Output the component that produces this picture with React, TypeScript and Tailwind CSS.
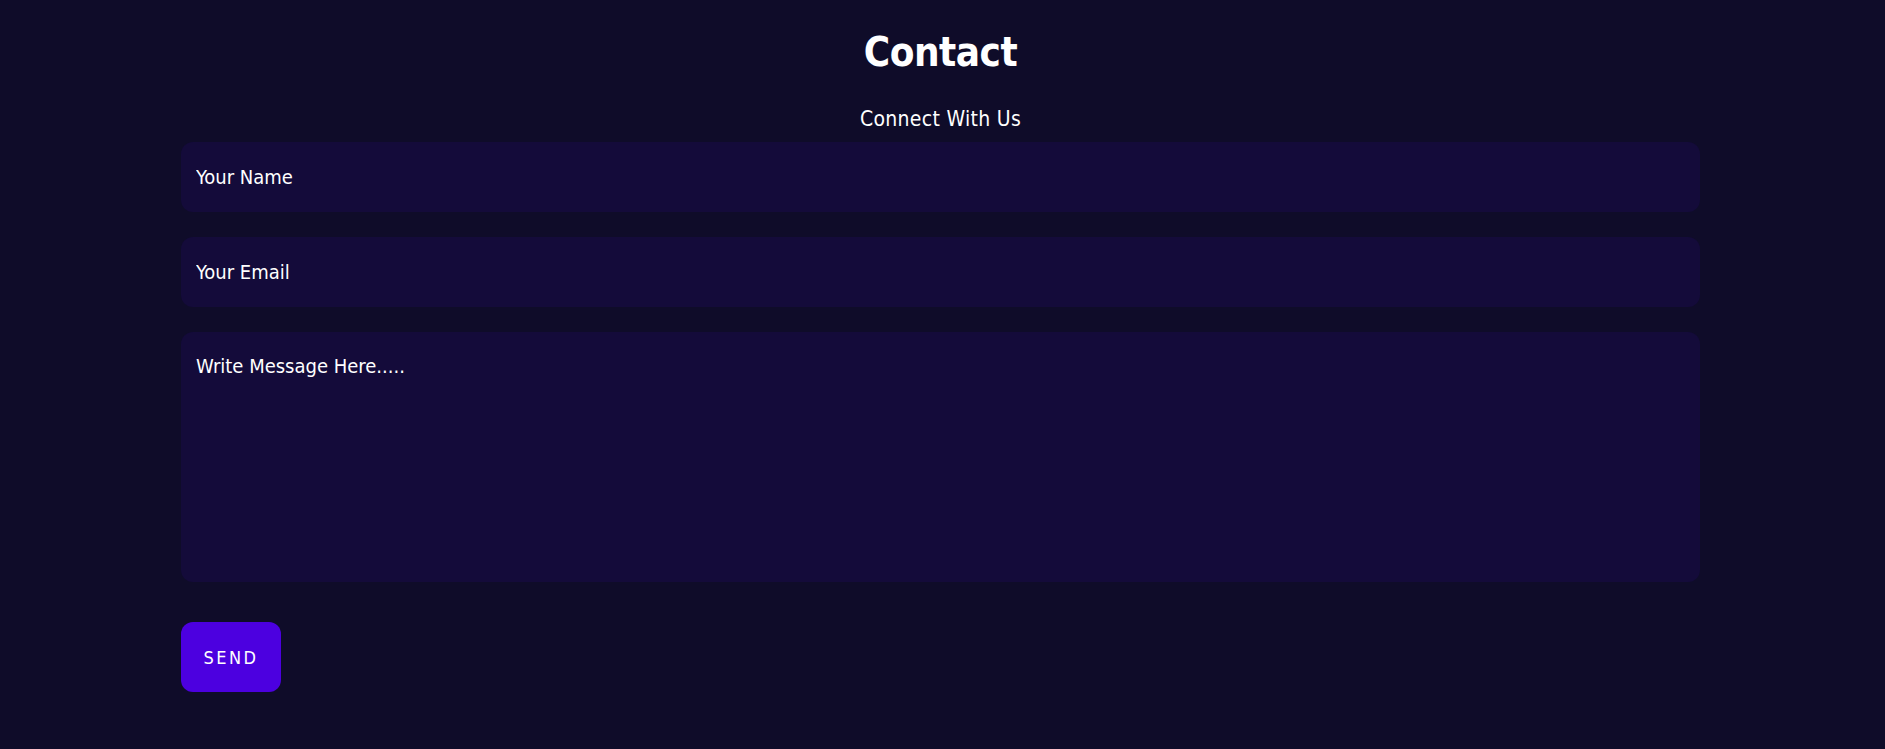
import React from 'react';

const fieldClass =
  "w-full rounded-xl bg-[#140b3a] px-[15px] text-[20px] text-white placeholder:text-white outline-none font-['DejaVu_Sans_Condensed','Liberation_Sans_Narrow',sans-serif]";

const App: React.FC = () => {
  return (
    <div className="min-h-screen w-full bg-[#0f0c29] pr-[4px] text-white font-['DejaVu_Sans_Condensed','Liberation_Sans_Narrow',sans-serif]">
      <div className="mx-auto flex w-[1519px] flex-col items-center pt-[26px]">
        <h1 className="text-[40px] font-bold leading-[52px] tracking-[-0.5px]">Contact</h1>
        <p className="mt-[28px] text-[21px] leading-[26px] tracking-[0.3px]">Connect With Us</p>
        <form className="mt-[10px] flex w-full flex-col" onSubmit={(e) => e.preventDefault()}>
          <input type="text" placeholder="Your Name" className={`${fieldClass} h-[70px]`} />
          <input type="email" placeholder="Your Email" className={`${fieldClass} mt-[25px] h-[70px]`} />
          <textarea
            placeholder="Write Message Here....."
            className={`${fieldClass} mt-[25px] h-[250px] resize-none pt-[19px]`}
          />
          <button
            type="submit"
            className="mt-[40px] h-[70px] w-[100px] rounded-xl bg-[#4c00e0] text-[18px] tracking-[2.5px] text-white"
          >
            SEND
          </button>
        </form>
      </div>
    </div>
  );
};

export default App;
